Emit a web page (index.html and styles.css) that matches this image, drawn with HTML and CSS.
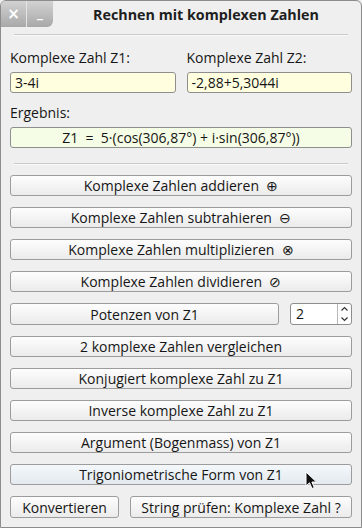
FILE: index.html
```html
<!DOCTYPE html>
<html lang="de">
<head>
	<meta charset="UTF-8">
	<title>Rechnen mit komplexen Zahlen</title>
	<link rel="stylesheet" href="styles.css">
</head>

<body>
	<div class="window">
		<div class="titlebar">
			<span class="wbtn close">&times;</span>
			<span class="wbtn min">_</span>
			<h1>Rechnen mit komplexen Zahlen</h1>
		</div>
		<div class="sep top"></div>
		<div class="content">
			<div class="inputs">
				<div class="field">
					<label>Komplexe Zahl Z1:</label>
					<div class="edit">3-4i</div>
				</div>
				<div class="field">
					<label>Komplexe Zahl Z2:</label>
					<div class="edit">-2,88+5,3044i</div>
				</div>
			</div>
			<label class="res_label">Ergebnis:</label>
			<div class="result">Z1  =  5·(cos(306,87°) + i·sin(306,87°))</div>
		</div>
		<div class="sep mid"></div>
		<div class="buttons">
			<button>Komplexe Zahlen addieren &nbsp;⊕</button>
			<button>Komplexe Zahlen subtrahieren &nbsp;⊖</button>
			<button>Komplexe Zahlen multiplizieren &nbsp;⊗</button>
			<button>Komplexe Zahlen dividieren &nbsp;⊘</button>
			<div class="row">
				<button class="grow">Potenzen von Z1</button>
				<div class="spin">
					<span class="spin_val">2</span>
					<span class="spin_arrows">
						<svg width="13" height="10" viewBox="0 0 13 10"><path d="M3.5 6.5 L6.5 3.5 L9.5 6.5" fill="none" stroke="#333" stroke-width="1.2"/></svg>
						<svg width="13" height="10" viewBox="0 0 13 10"><path d="M3.5 3.5 L6.5 6.5 L9.5 3.5" fill="none" stroke="#333" stroke-width="1.2"/></svg>
					</span>
				</div>
			</div>
			<button>2 komplexe Zahlen vergleichen</button>
			<button>Konjugiert komplexe Zahl zu Z1</button>
			<button>Inverse komplexe Zahl zu Z1</button>
			<button>Argument (Bogenmass) von Z1</button>
			<button class="hover">Trigoniometrische Form von Z1</button>
			<div class="row">
				<button class="konv">Konvertieren</button>
				<button class="grow">String prüfen: Komplexe Zahl ?</button>
			</div>
		</div>
		<svg class="cursor" width="14" height="20" viewBox="0 0 14 20"><path d="M1 1 L1 15 L4.5 11.8 L7 17.5 L9.3 16.5 L6.9 11 L11.5 11 Z" fill="#111" stroke="#fff" stroke-width="1" stroke-linejoin="round"/></svg>
	</div>
</body>
</html>
```

FILE: styles.css
```css
* {margin:0; padding:0; box-sizing:border-box;}
html, body {width:362px; height:528px; overflow:hidden;}
body {background:#efefef; font:14px/18px "Open Sans", Arial, sans-serif; color:#161616;}
.window {position:relative; width:362px; height:528px; border:1px solid #8c8c8c; border-radius:6px 6px 0 0; background:#efefef; overflow:hidden;}
.titlebar {display:flex; height:26px; align-items:center;}
.wbtn {width:26px; height:26px; display:flex; align-items:center; justify-content:center; color:#fff; font:bold 15px/1 "DejaVu Sans", sans-serif; background:linear-gradient(#d2d2d2, #a8a8a8); border-right:1px solid #e4e4e4;}
.wbtn.min {border-right:0; border-bottom-right-radius:6px; font-size:12px; padding-bottom:2px;}
.titlebar h1 {flex:1; text-align:center; font-size:14.3px; font-weight:bold; color:#1e1e1e; padding-top:2px; padding-right:2px;}
.sep {height:2px; border-top:1px solid #c9c9c9; border-bottom:1px solid #fafafa; margin:0 13px;}
.sep.top {margin-top:7px;}
.content {padding:13px 9px 0;}
.inputs {display:flex; gap:11px;}
.field {flex:1; display:flex; flex-direction:column;}
label {display:block; height:18px;}
.edit, .result {height:21px; margin-top:5px; border:1px solid #8e8e8e; border-radius:3px; background:#ffffe0; padding:0 4px; line-height:19px;}
.res_label {margin-top:11px;}
.result {background:#f6fde6; text-align:center; white-space:pre;}
.sep.mid {margin-top:15px;}
.buttons {display:flex; flex-direction:column; gap:11px; padding:10px 9px 0;}
button {height:21px; font:14px/19px "Open Sans", Arial, sans-serif; color:#161616; background:linear-gradient(#fdfdfd, #ebebeb); border:1px solid #9c9c9c; border-radius:3px;}
button.hover {background:linear-gradient(#f4f8fb, #e3e9ef);}
.row {display:flex; gap:11px;}
.row button {height:22px;}
.grow {flex:1;}
.konv {width:109px;}
.spin {width:62px; height:22px; display:flex; border:1px solid #8e8e8e; border-radius:3px; background:#fff;}
.spin_val {flex:1; padding-left:5px; line-height:20px; font-size:14px;}
.spin_arrows {width:14px; display:flex; flex-direction:column; border-left:1px solid #b8b8b8;}
.spin_arrows svg {display:block;}
.cursor {position:absolute; left:304px; top:470px;}
```
